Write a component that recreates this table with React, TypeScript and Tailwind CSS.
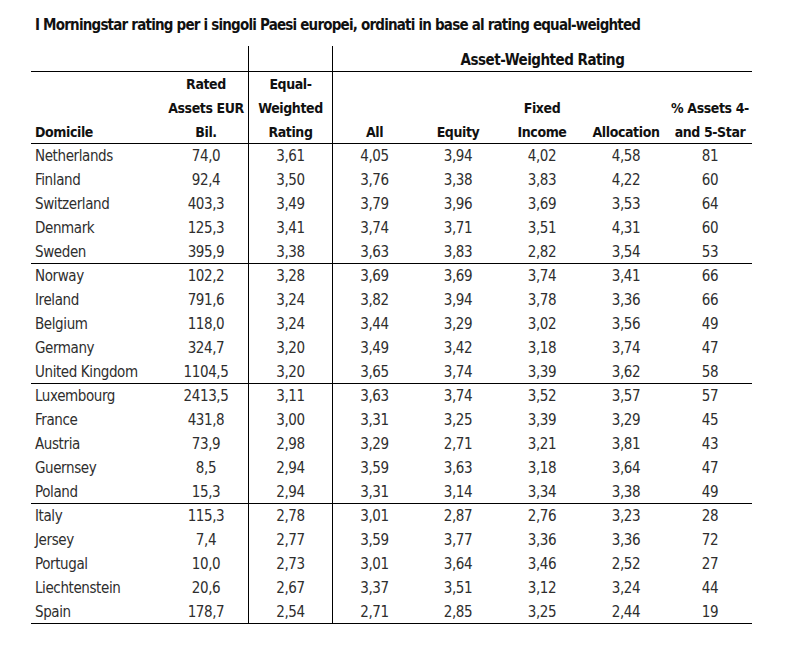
const rows: [string, string, string, string, string, string, string, string][] = [
  ["Netherlands", "74,0", "3,61", "4,05", "3,94", "4,02", "4,58", "81"],
  ["Finland", "92,4", "3,50", "3,76", "3,38", "3,83", "4,22", "60"],
  ["Switzerland", "403,3", "3,49", "3,79", "3,96", "3,69", "3,53", "64"],
  ["Denmark", "125,3", "3,41", "3,74", "3,71", "3,51", "4,31", "60"],
  ["Sweden", "395,9", "3,38", "3,63", "3,83", "2,82", "3,54", "53"],
  ["Norway", "102,2", "3,28", "3,69", "3,69", "3,74", "3,41", "66"],
  ["Ireland", "791,6", "3,24", "3,82", "3,94", "3,78", "3,36", "66"],
  ["Belgium", "118,0", "3,24", "3,44", "3,29", "3,02", "3,56", "49"],
  ["Germany", "324,7", "3,20", "3,49", "3,42", "3,18", "3,74", "47"],
  ["United Kingdom", "1104,5", "3,20", "3,65", "3,74", "3,39", "3,62", "58"],
  ["Luxembourg", "2413,5", "3,11", "3,63", "3,74", "3,52", "3,57", "57"],
  ["France", "431,8", "3,00", "3,31", "3,25", "3,39", "3,29", "45"],
  ["Austria", "73,9", "2,98", "3,29", "2,71", "3,21", "3,81", "43"],
  ["Guernsey", "8,5", "2,94", "3,59", "3,63", "3,18", "3,64", "47"],
  ["Poland", "15,3", "2,94", "3,31", "3,14", "3,34", "3,38", "49"],
  ["Italy", "115,3", "2,78", "3,01", "2,87", "2,76", "3,23", "28"],
  ["Jersey", "7,4", "2,77", "3,59", "3,77", "3,36", "3,36", "72"],
  ["Portugal", "10,0", "2,73", "3,01", "3,64", "3,46", "2,52", "27"],
  ["Liechtenstein", "20,6", "2,67", "3,37", "3,51", "3,12", "3,24", "44"],
  ["Spain", "178,7", "2,54", "2,71", "2,85", "3,25", "2,44", "19"],
];

const cols = "grid grid-cols-[133px_84px_84px_84px_84px_84px_84px_84px]";

export default function App() {
  return (
    <div className="min-h-screen bg-white pl-[31px] pt-[14px] font-['DejaVu_Sans_Condensed','DejaVu_Sans',sans-serif]">
      <h1 className="whitespace-nowrap pl-[4px] text-[15px] font-bold leading-[22px] tracking-[-0.8px] text-[#111]">
        I Morningstar rating per i singoli Paesi europei, ordinati in base al rating equal-weighted
      </h1>

      <div className="mt-[10px] w-[721px]">
        {/* top header band */}
        <div className={`${cols} h-[26px] border-b border-black text-[15px] font-bold tracking-[-0.5px] text-[#111]`}>
          <div />
          <div />
          <div className="border-l border-black" />
          <div className="col-span-5 flex items-center justify-center border-l border-black pt-[3px] leading-none">
            Asset-Weighted Rating
          </div>
        </div>

        {/* column headers */}
        <div className={`${cols} h-[72px] whitespace-nowrap border-b border-black text-[14px] font-bold leading-[24px] tracking-[-0.4px] text-[#111]`}>
          <div className="flex items-end pl-[4px]">Domicile</div>
          <div className="flex items-end justify-center text-center">
            Rated
            <br />
            Assets EUR
            <br />
            Bil.
          </div>
          <div className="flex items-end justify-center border-l border-black text-center">
            Equal-
            <br />
            Weighted
            <br />
            Rating
          </div>
          <div className="flex items-end justify-center border-l border-black">All</div>
          <div className="flex items-end justify-center">Equity</div>
          <div className="flex items-end justify-center text-center">
            Fixed
            <br />
            Income
          </div>
          <div className="flex items-end justify-center">Allocation</div>
          <div className="flex items-end justify-center text-center">
            % Assets 4-
            <br />
            and 5-Star
          </div>
        </div>

        {/* data rows */}
        {rows.map((r, i) => (
          <div
            key={r[0]}
            className={`${cols} h-[24px] text-[15px] leading-[24px] tracking-[-0.4px] text-[#2e2e2e] ${i % 5 === 4 ? "border-b border-black" : ""}`}
          >
            <div className="pl-[4px]">{r[0]}</div>
            <div className="text-center">{r[1]}</div>
            <div className="border-l border-black text-center">{r[2]}</div>
            <div className="border-l border-black text-center">{r[3]}</div>
            <div className="text-center">{r[4]}</div>
            <div className="text-center">{r[5]}</div>
            <div className="text-center">{r[6]}</div>
            <div className="text-center">{r[7]}</div>
          </div>
        ))}
      </div>
    </div>
  );
}
